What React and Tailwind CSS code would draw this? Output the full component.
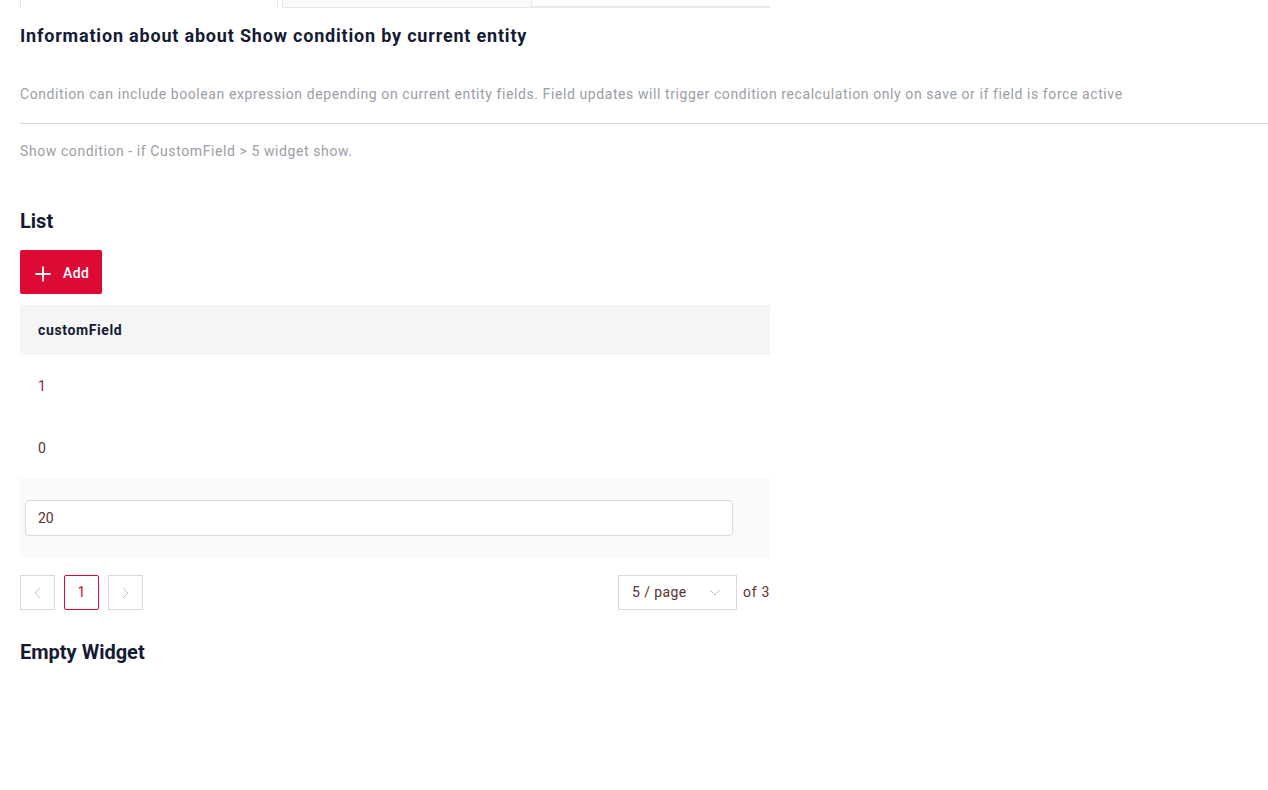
import React from "react";

const font = { fontFamily: "Roboto, 'Liberation Sans', sans-serif" };

function PlusIcon() {
  return (
    <svg width="16" height="16" viewBox="0 0 16 16" fill="none">
      <path d="M8 0.5V15.5M0.5 8H15.5" stroke="white" strokeWidth="1.8" />
    </svg>
  );
}

function Chevron({ dir = "left" }) {
  const d = dir === "left" ? "M7 1L2 6L7 11" : dir === "right" ? "M2 1L7 6L2 11" : "M1 2L6 7L11 2";
  const w = dir === "down" ? 12 : 9;
  const h = dir === "down" ? 9 : 12;
  return (
    <svg width={w} height={h} viewBox={`0 0 ${w} ${h}`} fill="none">
      <path d={d} stroke="#bfbfbf" strokeWidth="1" />
    </svg>
  );
}

export default function App() {
  return (
    <div className="min-h-[790px] bg-white pl-5" style={font}>
      {/* tabs, scrolled out of view */}
      <div className="flex h-[8px] w-[750px]">
        <div className="w-[258px] border-x border-[#e8e8e8] bg-white" />
        <div className="ml-[4px] w-[250px] border-x border-b border-[#e8e8e8] bg-[#fafafa]" />
        <div className="flex-1 border-b-2 border-[#e8e8e8]" />
      </div>

      <h2 className="mt-[16px] text-[18px] leading-[24px] font-bold tracking-[0.045em] text-[#141b33]">
        Information about about Show condition by current entity
      </h2>
      <p className="mt-[36px] text-[14px] leading-[20px] tracking-[0.042em] text-[#9b9ea6]">
        Condition can include boolean expression depending on current entity fields. Field updates will trigger condition recalculation only on save or if field is force active
      </p>
      <div className="mt-[19px] h-px bg-[#d6d6d6]" />
      <p className="mt-[17px] text-[14px] leading-[20px] tracking-[0.042em] text-[#9b9ea6]">
        Show condition - if CustomField &gt; 5 widget show.
      </p>

      <h2 className="mt-[48px] text-[20px] leading-[24px] font-bold text-[#141b33]">List</h2>

      <button className="mt-[17px] flex h-[44px] w-[82px] items-center gap-[12px] rounded-[2px] bg-[#dd0a35] pl-[15px] pt-[3px] text-[14px] font-medium tracking-[0.03em] text-white">
        <PlusIcon />
        <span>Add</span>
      </button>

      <div className="mt-[11px] w-[750px]">
        <div className="flex h-[50px] items-center bg-[#f5f5f5] pl-[18px] text-[14px] font-bold tracking-[0.045em] text-[#141b33]">
          customField
        </div>
        <div className="flex h-[62px] items-center pl-[18px] text-[14px] text-[#8a2450]">1</div>
        <div className="flex h-[61px] items-center pl-[18px] pt-[2px] text-[14px] text-[#5b3030]">0</div>
        <div className="flex h-[80px] items-center bg-[#fafafa] pl-[5px]">
          <div className="flex h-[36px] w-[708px] items-center rounded-[4px] border border-[#d9d9d9] bg-white pl-[12px] text-[14px] text-[#5b3030]">
            20
          </div>
        </div>
      </div>

      <div className="mt-[17px] flex w-[750px] items-center justify-between">
        <div className="flex gap-[9px]">
          <div className="flex h-[35px] w-[35px] items-center justify-center border border-[#d9d9d9]">
            <Chevron dir="left" />
          </div>
          <div className="flex h-[35px] w-[35px] items-center justify-center rounded-[2px] border border-[#dd0a35] text-[14px] text-[#dd0a35]">
            1
          </div>
          <div className="flex h-[35px] w-[35px] items-center justify-center border border-[#d9d9d9]">
            <Chevron dir="right" />
          </div>
        </div>
        <div className="flex items-center gap-[6px]">
          <div className="flex h-[35px] w-[119px] items-center justify-between border border-[#d9d9d9] pl-[13px] pr-[15px] text-[14px] tracking-[0.03em] text-[#5b3030]">
            <span>5 / page</span>
            <Chevron dir="down" />
          </div>
          <span className="text-[14px] tracking-[0.05em] text-[#5b3030]">of 3</span>
        </div>
      </div>

      <h2 className="mt-[30px] text-[20px] leading-[24px] font-bold text-[#141b33]">Empty Widget</h2>
    </div>
  );
}
